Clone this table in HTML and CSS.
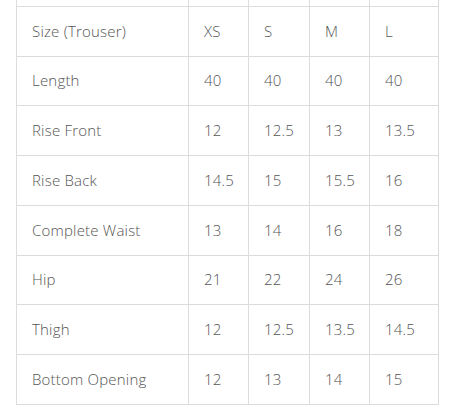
FILE: index.html
```html
<!DOCTYPE html>
<html>
<head>
<meta charset="utf-8">
<link rel="stylesheet" href="styles.css">
</head>
<body>
<table class="size-table">
  <colgroup>
    <col class="c-label"><col class="c-xs"><col class="c-s"><col class="c-m"><col class="c-l">
  </colgroup>
  <tbody>
    <tr class="cut-row"><td></td><td></td><td></td><td></td><td></td></tr>
    <tr><td>Size (Trouser)</td><td>XS</td><td>S</td><td>M</td><td>L</td></tr>
    <tr><td>Length</td><td>40</td><td>40</td><td>40</td><td>40</td></tr>
    <tr><td>Rise Front</td><td>12</td><td>12.5</td><td>13</td><td>13.5</td></tr>
    <tr><td>Rise Back</td><td>14.5</td><td>15</td><td>15.5</td><td>16</td></tr>
    <tr><td>Complete Waist</td><td>13</td><td>14</td><td>16</td><td>18</td></tr>
    <tr><td>Hip</td><td>21</td><td>22</td><td>24</td><td>26</td></tr>
    <tr><td>Thigh</td><td>12</td><td>12.5</td><td>13.5</td><td>14.5</td></tr>
    <tr><td>Bottom Opening</td><td>12</td><td>13</td><td>14</td><td>15</td></tr>
  </tbody>
</table>
</body>
</html>
```
FILE: styles.css
```css
html, body {
  margin: 0;
  padding: 0;
  background: #fff;
}
body {
  padding: 0 12px 0 16px;
  overflow: hidden;
}
.size-table {
  border-collapse: collapse;
  table-layout: fixed;
  width: 422px;
  margin-top: -44px;
  font-family: "Open Sans", sans-serif;
  font-size: 15px;
  font-weight: 300;
  letter-spacing: 0.2px;
  color: #555;
}
.c-label { width: 172px; }
.c-xs { width: 60px; }
.c-s { width: 61px; }
.c-m { width: 60px; }
.c-l { width: 69px; }
.size-table td {
  border: 1px solid #dcdcdc;
  height: 49.75px;
  padding: 0 0 1px 15px;
  vertical-align: middle;
  text-align: left;
  white-space: nowrap;
  box-sizing: border-box;
}
```
